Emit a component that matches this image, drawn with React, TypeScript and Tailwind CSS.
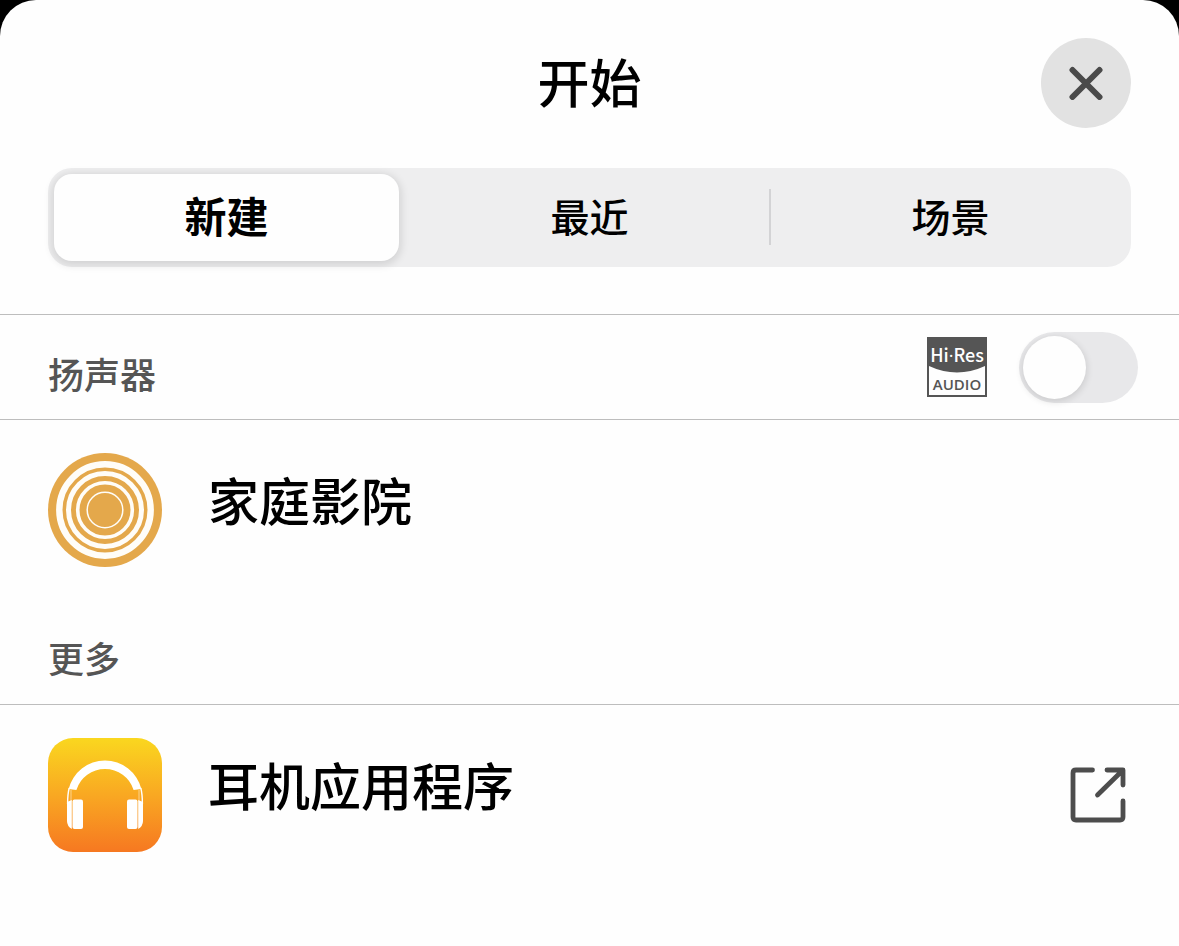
import { useState } from "react";

const tabs = ["新建", "最近", "场景"];

function CloseIcon() {
  return (
    <svg viewBox="0 0 34 34" className="size-[34px]" fill="none" stroke="#4a4a4a" strokeWidth="6" strokeLinecap="round" aria-hidden="true">
      <path d="M3.500 4 30.500 31M30.500 4 3.500 31" />
    </svg>
  );
}

function HiResBadge() {
  return (
    <svg viewBox="0 0 60 60" className="size-[60px] shrink-0" role="img" aria-label="Hi-Res Audio">
      <rect width="60" height="60" fill="#555" />
      <path d="M2 29Q30 42 58 29V58H2Z" fill="#fefefe" />
      <text x="30" y="25" textAnchor="middle" fontFamily="'Noto Sans CJK SC', sans-serif" fontSize="18" fontWeight="500" fill="#fff">
        Hi<tspan fontFamily="'Open Sans', sans-serif">·</tspan>Res
      </text>
      <text x="30" y="53" textAnchor="middle" fontFamily="'Open Sans', sans-serif" fontSize="15" fontWeight="600" fill="#555">
        AUDIO
      </text>
    </svg>
  );
}

function SpeakerIcon() {
  return (
    <svg viewBox="0 0 114 114" className="size-[114px] shrink-0" fill="none" aria-hidden="true">
      <circle cx="57" cy="57" r="57" fill="#e4a84b" />
      <g stroke="#fffdf8">
        <circle cx="57" cy="57" r="45.700" strokeWidth="6.400" />
        <circle cx="57" cy="57" r="36.500" strokeWidth="5" />
        <circle cx="57" cy="57" r="27.300" strokeWidth="3.600" />
        <circle cx="57" cy="57" r="17.800" strokeWidth="1.500" />
      </g>
    </svg>
  );
}

function HeadphonesIcon() {
  return (
    <svg viewBox="0 0 114 114" className="size-[114px] shrink-0" aria-hidden="true">
      <defs>
        <linearGradient id="sunset" x1="0" y1="0" x2="0" y2="1">
          <stop offset="0" stopColor="#fad71f" />
          <stop offset=".5" stopColor="#f9a822" />
          <stop offset="1" stopColor="#f67821" />
        </linearGradient>
      </defs>
      <rect width="114" height="114" rx="25" fill="url(#sunset)" />
      <path d="M20.600 51A37.500 37.500 0 0 1 93.400 51L85.600 52A30 30 0 0 0 28.400 52Z" fill="#fff" />
      <path d="M21.200 50Q19.600 56 19.600 66M92.800 50Q94.400 56 94.400 66" fill="none" stroke="#fff" strokeWidth="1.400" />
      <path d="M23 52v12M91 52v12" fill="none" stroke="#fff" strokeWidth=".5" />
      <path d="M23.800 62V91Q19 88 19 83V64ZM90.200 62V91Q95 88 95 83V64Z" fill="#fff" />
      <rect x="24.500" y="61.500" width="10.500" height="29.500" rx="2" fill="#fff" />
      <rect x="79" y="61.500" width="10.500" height="29.500" rx="2" fill="#fff" />
    </svg>
  );
}

function ExternalIcon() {
  return (
    <svg viewBox="0 0 56 56" className="size-14" fill="none" stroke="#4d4d4d" strokeWidth="4.800" strokeLinecap="round" strokeLinejoin="round" aria-hidden="true">
      <path d="M22.500 3H6Q3 3 3 6V50Q3 53 6 53H50Q53 53 53 50V34M37 3H53V18M52 4 27.500 28" />
    </svg>
  );
}

export default function App() {
  const [active, setActive] = useState(0);
  const [hiRes, setHiRes] = useState(false);

  return (
    <div className="min-h-screen bg-black font-['Noto_Sans_CJK_SC',sans-serif] font-medium">
      <main className="min-h-screen rounded-t-[36px] bg-[#fefefe] text-black">
        <header className="grid grid-cols-[90px_1fr_90px] items-center px-12 pt-[38px]">
          <h1 className="col-start-2 pb-1 text-center text-[52px] leading-[86px]">开始</h1>
          <button type="button" aria-label="关闭" className="flex size-[90px] items-center justify-center rounded-full bg-[#e2e2e2]">
            <CloseIcon />
          </button>
        </header>

        <div className="px-12 pt-10 pb-[47px]">
          <div role="tablist" className="relative grid h-[99px] grid-cols-3 rounded-3xl bg-[#eeeeef]">
            {tabs.map((tab, i) => (
              <button
                key={tab}
                type="button"
                role="tab"
                aria-selected={active === i}
                onClick={() => setActive(i)}
                className={
                  active === i
                    ? "my-[6px] mr-[10px] ml-[6px] rounded-[18px] bg-[#fefefe] pb-[6px] text-[42px] leading-[80px] font-bold shadow-[0_2px_8px_2px_rgba(0,0,0,0.12)]"
                    : "my-[6px] pb-[6px] text-[39px] leading-[80px]"
                }
              >
                {tab}
              </button>
            ))}
            <span className="absolute top-[21px] left-2/3 h-14 w-[2px] -translate-x-1/2 bg-[#d3d3d5]" />
          </div>
        </div>

        <section>
          <div className="flex items-center border-y border-[#bdbdbd] pr-[41px] pl-12">
            <h2 className="flex-1 pt-3 text-[36px] leading-[92px] text-[#555]">扬声器</h2>
            <HiResBadge />
            <label className="relative ml-8 h-[71px] w-[119px] shrink-0 cursor-pointer">
              <input
                type="checkbox"
                role="switch"
                aria-label="Hi-Res Audio"
                checked={hiRes}
                onChange={(e) => setHiRes(e.target.checked)}
                className="peer size-full cursor-pointer appearance-none rounded-full bg-[#e8e8ea] checked:bg-[#e4a84b]"
              />
              <span className="pointer-events-none absolute top-1 left-1 size-[63px] rounded-full bg-[#fefefe] shadow-[0_2px_7px_1px_rgba(0,0,0,0.12)] peer-checked:translate-x-12" />
            </label>
          </div>
          <button type="button" className="flex w-full items-center gap-[46px] px-12 pt-[33px] text-left">
            <SpeakerIcon />
            <span className="pb-[22px] text-[51px] leading-[80px]">家庭影院</span>
          </button>
        </section>

        <section className="pt-[58px]">
          <h2 className="border-b border-[#bdbdbd] px-12 pb-[14px] text-[36px] leading-[65px] text-[#555]">更多</h2>
          <a href="#headphones" className="flex items-center gap-[46px] pt-[33px] pr-[53px] pl-12">
            <HeadphonesIcon />
            <span className="flex-1 pb-[22px] text-[51px] leading-[80px]">耳机应用程序</span>
            <ExternalIcon />
          </a>
        </section>
      </main>
    </div>
  );
}
